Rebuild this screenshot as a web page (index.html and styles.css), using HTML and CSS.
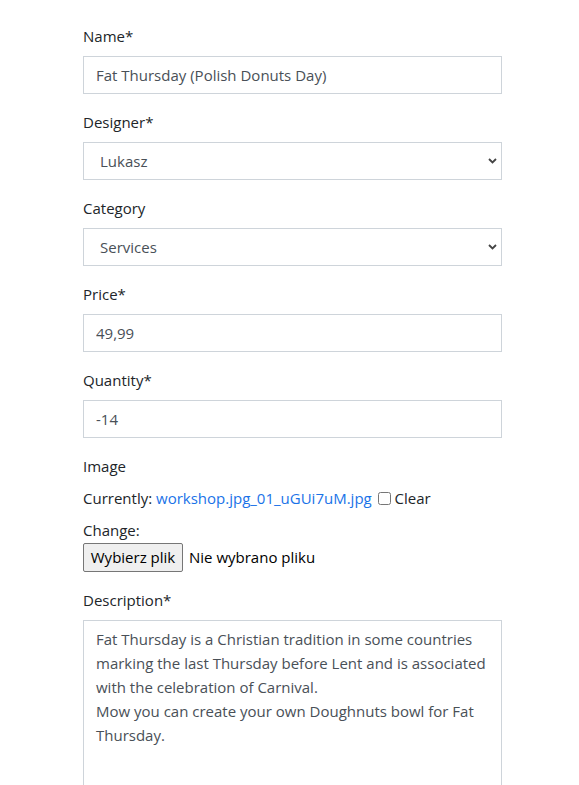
FILE: index.html
```html
<!DOCTYPE html>
<html lang="en">
<head>
<meta charset="utf-8">
<title>Edit product</title>
<link rel="stylesheet" href="styles.css">
</head>
<body>
<form class="form">
  <div class="group">
    <label class="lbl" for="name">Name*</label>
    <input class="ctl" id="name" type="text" value="Fat Thursday (Polish Donuts Day)">
  </div>
  <div class="group">
    <label class="lbl" for="designer">Designer*</label>
    <div class="select-wrap">
      <select class="ctl sel" id="designer"><option>Lukasz</option></select>
      <svg class="chev" width="9" height="6" viewBox="0 0 9 6"><path d="M1 1l3.5 3.5L8 1" fill="none" stroke="#444" stroke-width="1.8"/></svg>
    </div>
  </div>
  <div class="group">
    <label class="lbl" for="category">Category</label>
    <div class="select-wrap">
      <select class="ctl sel" id="category"><option>Services</option></select>
      <svg class="chev" width="9" height="6" viewBox="0 0 9 6"><path d="M1 1l3.5 3.5L8 1" fill="none" stroke="#444" stroke-width="1.8"/></svg>
    </div>
  </div>
  <div class="group">
    <label class="lbl" for="price">Price*</label>
    <input class="ctl" id="price" type="text" value="49,99">
  </div>
  <div class="group">
    <label class="lbl" for="qty">Quantity*</label>
    <input class="ctl" id="qty" type="text" value="-14">
  </div>
  <div class="group">
    <label class="lbl">Image</label>
    <div class="current">Currently: <a class="link" href="#">workshop.jpg_01_uGUi7uM.jpg</a> <input class="chk" type="checkbox" id="clear"> <label class="inline-lbl" for="clear">Clear</label></div>
    <div class="line">Change:</div>
    <div class="file-row"><button type="button" class="file-btn">Wybierz plik</button><span class="file-none">Nie wybrano pliku</span></div>
  </div>
  <div class="group last">
    <label class="lbl" for="desc">Description*</label>
    <textarea class="ctl area" id="desc">Fat Thursday is a Christian tradition in some countries marking the last Thursday before Lent and is associated with the celebration of Carnival.
Mow you can create your own Doughnuts bowl for Fat Thursday.</textarea>
  </div>
</form>
</body>
</html>
```
FILE: styles.css
```css
html, body {
  margin: 0;
  padding: 0;
  background: #fff;
}
html {
  height: 785px;
  overflow: hidden;
}
body {
  font-family: "Open Sans", "Noto Sans", sans-serif;
  font-size: 15px;
  line-height: 24px;
  color: #212529;
}
.form {
  width: 419px;
  margin: 0 0 0 83px;
  padding-top: 24px;
}
.group {
  margin-bottom: 16px;
}
.group.last {
  margin-bottom: 0;
}
.lbl {
  display: block;
  margin-bottom: 8px;
  line-height: 24px;
}
.ctl {
  display: block;
  box-sizing: border-box;
  width: 100%;
  height: 38px;
  margin: 0;
  padding: 6px 12px;
  border: 1px solid #ced4da;
  border-radius: 0;
  background: #fff;
  font-family: inherit;
  font-size: 15px;
  line-height: 24px;
  color: #495057;
  outline: none;
}
.select-wrap {
  position: relative;
}
.sel {
  -webkit-appearance: none;
  appearance: none;
  padding-left: 16px;
}
.chev {
  position: absolute;
  right: 5px;
  top: 16px;
  pointer-events: none;
}
.current {
  line-height: 24px;
  padding-bottom: 8px;
}
.link {
  color: #1a73e8;
  text-decoration: none;
}
.chk {
  width: 13px;
  height: 13px;
  margin: 0 0 0 2px;
  vertical-align: -1px;
}
.inline-lbl {
  display: inline;
}
.line {
  line-height: 24px;
}
.file-row {
  display: flex;
  align-items: center;
  gap: 6px;
  height: 30px;
}
.file-btn {
  box-sizing: border-box;
  width: 100px;
  height: 29px;
  margin: 0;
  padding: 0 6px;
  border: 1px solid #767676;
  border-radius: 2px;
  background: #efefef;
  font-family: inherit;
  font-size: 15px;
  line-height: 27px;
  white-space: nowrap;
  color: #000;
}
.file-none {
  color: #000;
}
.area {
  height: 166px;
  resize: none;
  overflow: hidden;
  border-bottom-color: transparent;
}
```
